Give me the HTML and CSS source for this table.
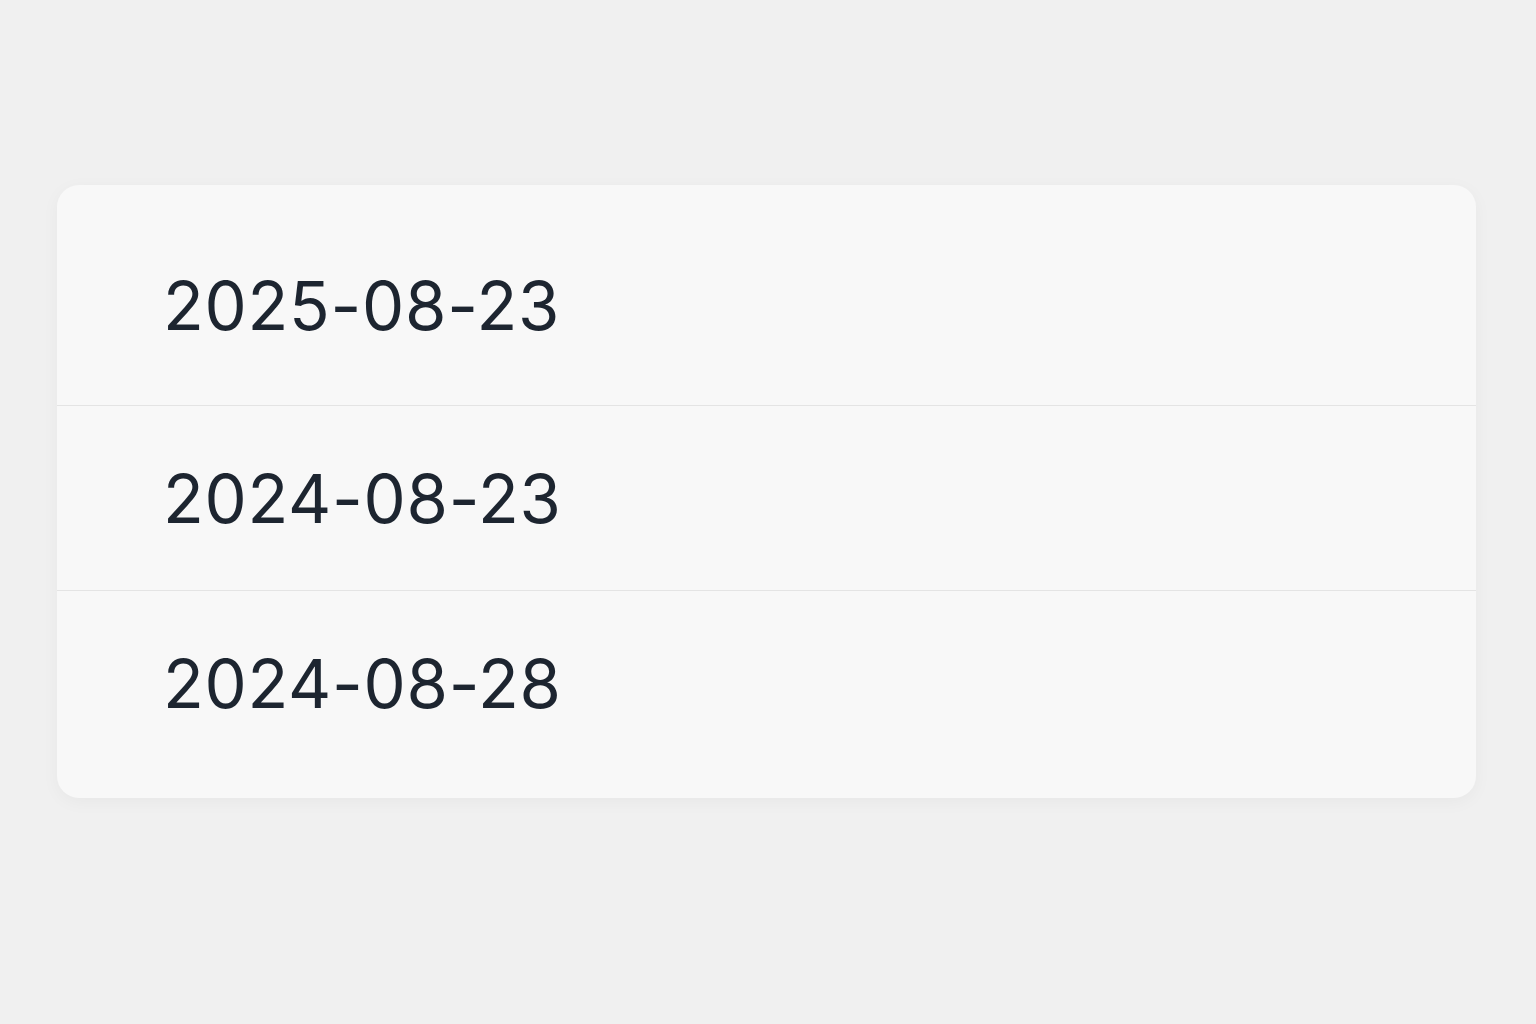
FILE: index.html
```html
<!DOCTYPE html>
<html>
<head>
  <title>Tanggal</title>
  <link rel="stylesheet" href="styles.css">
</head>
<body>

<div class="card">
  <div class="row first">2025-08-23</div>
  <div class="row">2024-08-23</div>
  <div class="row last">2024-08-28</div>
</div>

</body>
</html>
```

FILE: styles.css
```css
body {
  margin: 0;
  padding: 185px 60px 0 57px;
  background-color: #f0f0f0;
  font-family: 'Inter', 'Noto Sans', sans-serif;
  color: #1d2530;
  height: 1024px;
  box-sizing: border-box;
}

.card {
  background-color: #f8f8f8;
  border-radius: 22px;
  box-shadow: 0 4px 18px rgba(0, 0, 0, 0.04);
  overflow: hidden;
}

.row {
  height: 185px;
  display: flex;
  align-items: center;
  padding-left: 106px;
  font-size: 67px;
  letter-spacing: 0.7px;
  border-top: 1px solid #e4e4e4;
  box-sizing: border-box;
}

.row.first {
  height: 220px;
  padding-top: 20px;
  border-top: none;
}

.row.last {
  height: 208px;
  padding-bottom: 22px;
}
```
